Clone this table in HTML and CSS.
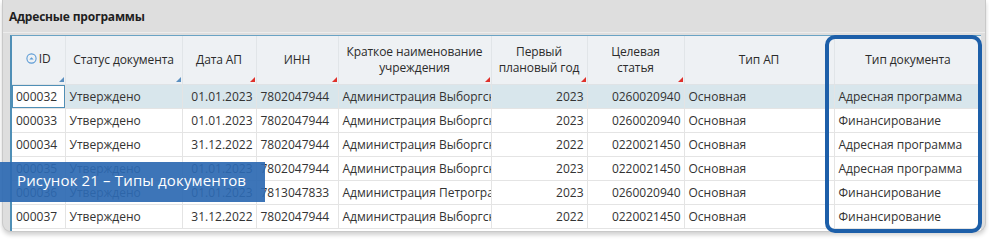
FILE: index.html
```html
<!DOCTYPE html>
<html lang="ru">
<head>
<meta charset="utf-8">
<link rel="stylesheet" href="styles.css">
</head>
<body>
<div class="page">
  <div class="card">
    <div class="title">Адресные программы</div>
    <div class="grid-wrap">
      <table class="grid">
        <colgroup>
          <col style="width:53px"><col style="width:117px"><col style="width:74px"><col style="width:82px"><col style="width:153px"><col style="width:96px"><col style="width:97px"><col style="width:150px"><col style="width:148px">
        </colgroup>
        <thead>
          <tr>
            <th class="s-blue"><span class="sort-ic"><svg width="11" height="11" viewBox="0 0 11 11"><circle cx="5.5" cy="5.5" r="4.6" fill="none" stroke="#5b9bd5" stroke-width="1.1"/><path d="M3.3 6.6 L5.5 4.2 L7.7 6.6 Z" fill="#5b9bd5"/></svg></span>ID</th>
            <th class="s-blue">Статус документа</th>
            <th class="s-red">Дата АП</th>
            <th class="s-red">ИНН</th>
            <th class="s-red">Краткое наименование учреждения</th>
            <th class="s-red">Первый плановый год</th>
            <th class="s-red">Целевая<br>статья</th>
            <th>Тип АП</th>
            <th>Тип документа</th>
          </tr>
        </thead>
        <tbody>
          <tr class="sel"><td class="focus">000032</td><td>Утверждено</td><td class="r">01.01.2023</td><td>7802047944</td><td class="clip">Администрация Выборгского</td><td class="r">2023</td><td class="r">0260020940</td><td>Основная</td><td>Адресная программа</td></tr>
          <tr><td>000033</td><td>Утверждено</td><td class="r">01.01.2023</td><td>7802047944</td><td class="clip">Администрация Выборгского</td><td class="r">2023</td><td class="r">0260020940</td><td>Основная</td><td>Финансирование</td></tr>
          <tr><td>000034</td><td>Утверждено</td><td class="r">31.12.2022</td><td>7802047944</td><td class="clip">Администрация Выборгского</td><td class="r">2022</td><td class="r">0220021450</td><td>Основная</td><td>Адресная программа</td></tr>
          <tr><td>000035</td><td>Утверждено</td><td class="r">01.01.2023</td><td>7802047944</td><td class="clip">Администрация Выборгского</td><td class="r">2023</td><td class="r">0220021450</td><td>Основная</td><td>Адресная программа</td></tr>
          <tr><td>000036</td><td>Утверждено</td><td class="r">01.01.2023</td><td>7813047833</td><td class="clip">Администрация Петроградского</td><td class="r">2023</td><td class="r">0260020940</td><td>Основная</td><td>Финансирование</td></tr>
          <tr><td>000037</td><td>Утверждено</td><td class="r">31.12.2022</td><td>7802047944</td><td class="clip">Администрация Выборгского</td><td class="r">2022</td><td class="r">0220021450</td><td>Основная</td><td>Финансирование</td></tr>
        </tbody>
      </table>
    </div>
  </div>
  <div class="highlight"></div>
  <div class="caption">Рисунок 21 – Типы документов</div>
</div>
</body>
</html>
```

FILE: styles.css
```css
* { box-sizing: border-box; }
html, body { margin: 0; padding: 0; background: #ffffff; }
body { font-family: "Open Sans", "DejaVu Sans", sans-serif; width: 989px; height: 240px; overflow: hidden; }

.page { position: relative; width: 989px; height: 240px; padding: 0 3px 0 2px; }

.card {
  height: 232px;
  background: #dedede;
  border: 1px solid #c9c9c9;
  border-top: none;
  border-radius: 0 0 9px 9px;
  box-shadow: 0 3px 4px rgba(0,0,0,0.18);
  overflow: hidden;
  display: flex;
  flex-direction: column;
}

.title {
  height: 33px;
  padding: 8px 0 0 6px;
  font-size: 12px;
  font-weight: 700;
  color: #1f1f1f;
  letter-spacing: -0.2px;
  border-bottom: 1px solid #ececec;
}

.grid-wrap {
  margin: 2px 4px 0 7px;
  background: #ffffff;
  border-top: 1px solid #6aa3c4;
  border-left: 2px solid #4f8fb6;
  flex: 1;
  overflow: hidden;
}

.grid {
  table-layout: fixed;
  border-collapse: collapse;
  width: 970px;
  font-size: 12px;
  color: #333333;
}

.grid th {
  height: 48px;
  background: #eef1f4;
  font-weight: 400;
  color: #2b2b2b;
  text-align: center;
  line-height: 16px;
  padding: 0 4px;
  border-right: 1px solid #e1e5e8;
  border-bottom: 1px solid #dfe3e6;
  position: relative;
  letter-spacing: -0.1px;
}
.grid th.s-blue::after,
.grid th.s-red::after {
  content: "";
  position: absolute;
  right: 1px;
  bottom: 2px;
  width: 0; height: 0;
  border-style: solid;
  border-width: 0 0 5px 5px;
}
.grid th.s-blue::after { border-color: transparent transparent #5a8fc0 transparent; }
.grid th.s-red::after { border-color: transparent transparent #e0302a transparent; }

.sort-ic { display: inline-block; vertical-align: -1px; margin-right: 2px; }

.grid td {
  height: 24px;
  padding: 0 4px 0 4px;
  border-right: 1px solid #e4e4e4;
  border-bottom: 1px solid #e4e4e4;
  white-space: nowrap;
  overflow: hidden;
}
.grid td.r { text-align: right; padding-right: 3px; }
.grid td.clip { text-overflow: clip; }
.grid tr.sel td { background: #d8e6ec; }
.grid tr.sel td.focus { background: #ffffff; box-shadow: inset 0 0 0 1px #4f8fb6; }

.highlight {
  position: absolute;
  left: 825px;
  top: 35px;
  width: 157px;
  height: 198px;
  border: 4px solid #1d5fa9;
  border-radius: 10px;
}

.caption {
  position: absolute;
  left: 0;
  top: 162px;
  width: 265px;
  height: 40px;
  padding: 8px 0 0 17px;
  background: rgba(45, 105, 178, 0.92);
  color: #ffffff;
  font-size: 15px;
  letter-spacing: 0.15px;
}
```
